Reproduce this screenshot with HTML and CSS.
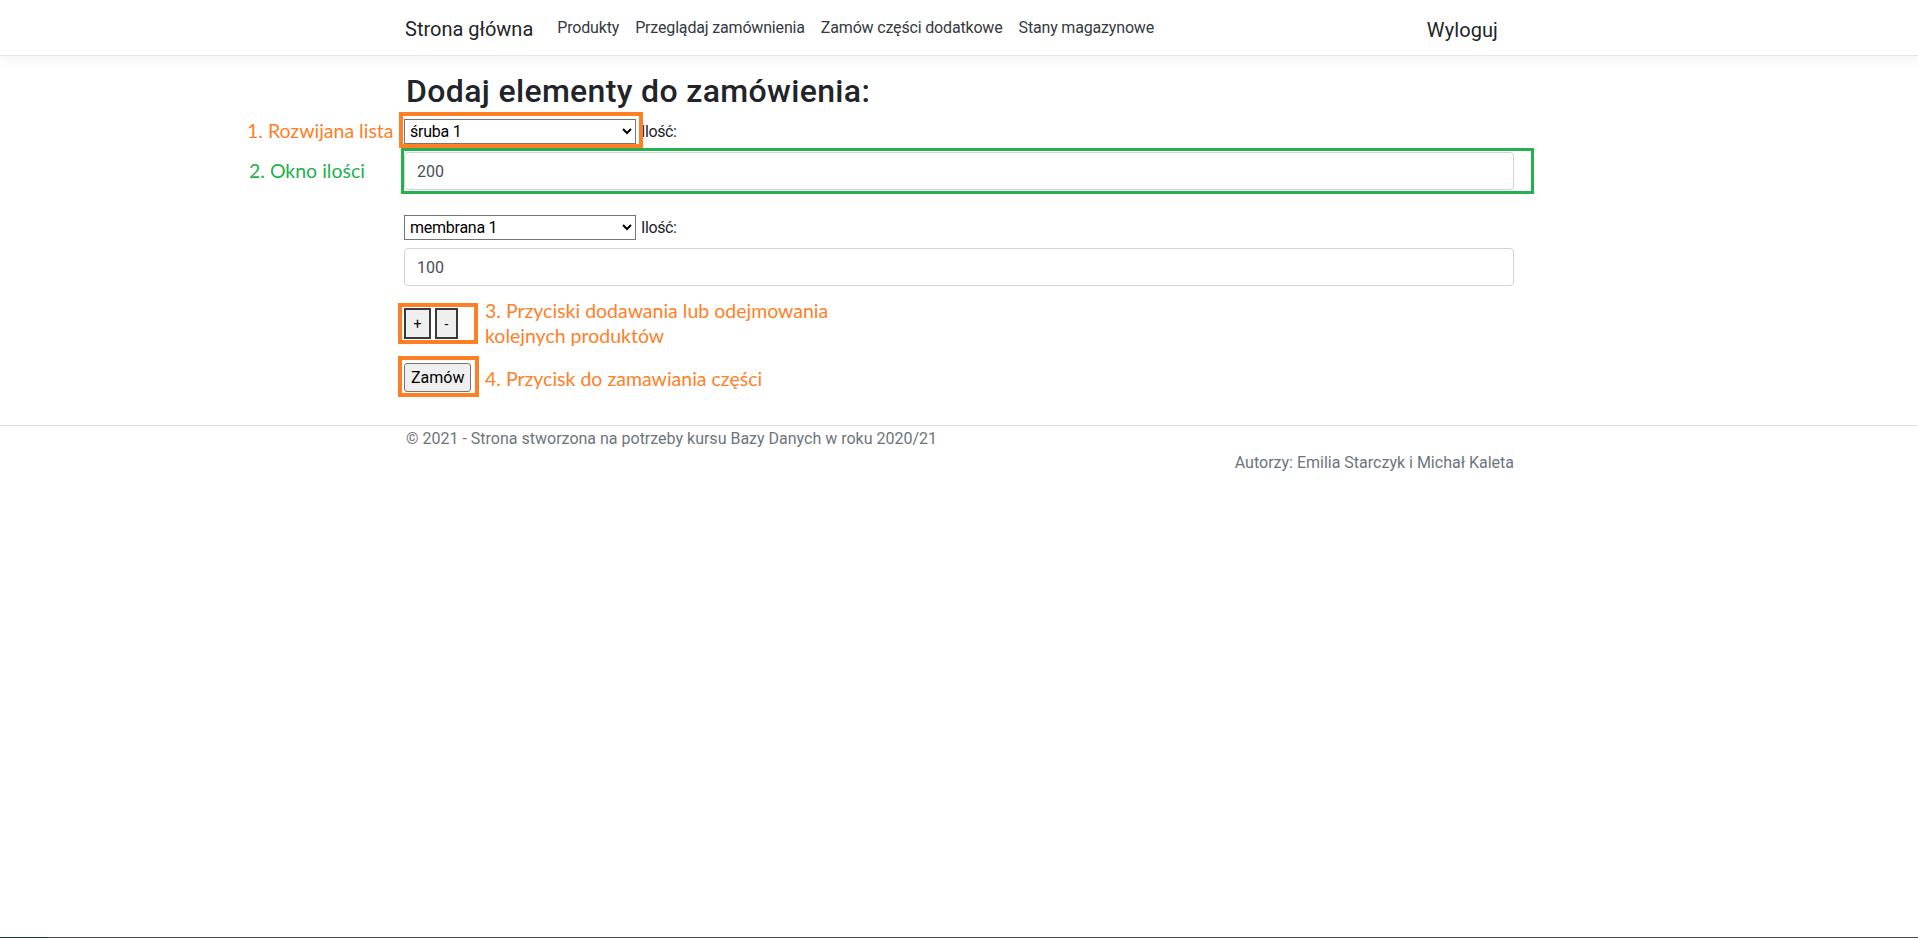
FILE: index.html
```html
<!DOCTYPE html>
<html lang="pl">
<head>
<meta charset="utf-8">
<title>Dodaj elementy do zamówienia</title>
<link rel="stylesheet" href="styles.css">
</head>
<body>
<div class="page">
  <header class="navbar">
    <div class="container nav-inner">
      <a class="brand" href="#">Strona główna</a>
      <ul class="nav-links">
        <li><a href="#">Produkty</a></li>
        <li><a href="#">Przeglądaj zamównienia</a></li>
        <li><a href="#">Zamów części dodatkowe</a></li>
        <li><a href="#">Stany magazynowe</a></li>
      </ul>
      <a class="logout" href="#">Wyloguj</a>
    </div>
  </header>

  <main class="container main">
    <h2 class="title">Dodaj elementy do zamówienia:</h2>
    <form class="order-form">
      <div class="item">
        <div class="item-row">
          <select class="product"><option>śruba 1</option><option>membrana 1</option></select>
          <label class="qty-label">Ilość:</label>
        </div>
        <input class="form-control" type="text" value="200">
      </div>
      <div class="item">
        <div class="item-row">
          <select class="product"><option>membrana 1</option><option>śruba 1</option></select>
          <label class="qty-label">Ilość:</label>
        </div>
        <input class="form-control" type="text" value="100">
      </div>
      <div class="adders">
        <button type="button" class="btn-sq">+</button>
        <button type="button" class="btn-sq btn-minus">-</button>
      </div>
      <div class="submit-row">
        <button type="button" class="btn-order">Zamów</button>
      </div>
    </form>
  </main>

  <footer class="footer">
    <div class="container">
      <div class="copy">© 2021 - Strona stworzona na potrzeby kursu Bazy Danych w roku 2020/21</div>
      <div class="authors">Autorzy: Emilia Starczyk i Michał Kaleta</div>
    </div>
  </footer>

  <div class="ann-box ann-box-1"></div>
  <div class="ann-box ann-box-2"></div>
  <div class="ann-box ann-box-3"></div>
  <div class="ann-box ann-box-4"></div>
  <div class="ann-text ann-text-1">1. Rozwijana lista</div>
  <div class="ann-text ann-text-2">2. Okno ilości</div>
  <div class="ann-text ann-text-3">3. Przyciski dodawania lub odejmowania<br>kolejnych produktów</div>
  <div class="ann-text ann-text-4">4. Przycisk do zamawiania części</div>

  <div class="taskbar-edge"><span class="taskbar-edge-start"></span></div>
</div>
</body>
</html>
```

FILE: styles.css
```css
* { box-sizing: border-box; }

html, body {
  margin: 0;
  padding: 0;
  background: #fff;
}

body {
  font-family: Roboto, "Liberation Sans", sans-serif;
  font-size: 16px;
  line-height: 1.5;
  color: #212529;
  min-height: 938px;
}

.page {
  position: relative;
  min-height: 938px;
}

.container {
  width: 1140px;
  margin: 0 auto;
  padding: 0 15px;
}

/* ---------- navbar ---------- */
.navbar {
  height: 56px;
  background: #fff;
  border-bottom: 1px solid #e3e5e8;
  box-shadow: 0 4px 12px rgba(0, 0, 0, 0.05);
}

.nav-inner {
  height: 55px;
  display: flex;
  align-items: center;
}

.brand {
  font-size: 20px;
  line-height: 30px;
  color: #212529;
  text-decoration: none;
  margin-left: 1px;
  margin-right: 16px;
  padding-top: 3px;
}

.nav-links {
  list-style: none;
  margin: 0;
  padding: 0;
  display: flex;
  flex: 1;
}

.nav-links a {
  display: block;
  padding: 8px 8px;
  font-size: 16px;
  line-height: 24px;
  color: #343a40;
  text-decoration: none;
  letter-spacing: -0.17px;
}

.logout {
  font-size: 20px;
  line-height: 30px;
  color: #212529;
  text-decoration: none;
  padding-right: 16px;
  padding-top: 5px;
  letter-spacing: 0.1px;
}

/* ---------- main ---------- */
.main {
  padding-top: 16px;
  padding-bottom: 33px;
}

.title {
  margin: 0 0 8.6px;
  font-size: 32px;
  line-height: 38.4px;
  font-weight: 500;
  color: #212529;
  padding-left: 2px;
  letter-spacing: 0.35px;
}

.item {
  margin-bottom: 25px;
}

.item-row {
  display: flex;
  align-items: center;
  height: 25px;
  margin-bottom: 8px;
}

.product {
  width: 232px;
  height: 25px;
  font-family: Roboto, "Liberation Sans", sans-serif;
  font-size: 16px;
  letter-spacing: -0.25px;
  color: #000;
  background: #fff;
  border: 1px solid #767676;
  border-radius: 0;
  padding: 0 0 0 1px;
  margin: 0;
}

.qty-label {
  margin-left: 5px;
  font-size: 16px;
  line-height: 24px;
  color: #212529;
  letter-spacing: -0.4px;
}

.form-control {
  display: block;
  width: 100%;
  height: 38px;
  padding: 6px 12px;
  font-family: Roboto, "Liberation Sans", sans-serif;
  font-size: 16px;
  line-height: 24px;
  color: #495057;
  background: #fff;
  border: 1px solid #ced4da;
  border-radius: 4px;
  margin: 0;
}

.adders {
  display: flex;
  gap: 4px;
  margin-top: -3px;
  margin-bottom: 24px;
}

.btn-sq {
  width: 27px;
  height: 31px;
  padding: 0;
  margin: 0;
  font-family: Roboto, "Liberation Sans", sans-serif;
  font-size: 14px;
  color: #000;
  background: #efefef;
  border: 2px solid #3a3a3a;
  border-radius: 0;
}

.btn-minus {
  width: 23px;
}

.submit-row {
  display: flex;
}

.btn-order {
  height: 29px;
  padding: 0 6px;
  margin: 0;
  font-family: Roboto, "Liberation Sans", sans-serif;
  font-size: 16px;
  color: #000;
  background: #efefef;
  border: 1px solid #767676;
  border-radius: 3px;
}

/* ---------- footer ---------- */
.footer {
  border-top: 1px solid #dee2e6;
  color: #6c757d;
  font-size: 16px;
  line-height: 24px;
}

.copy {
  padding-top: 1px;
  padding-left: 2px;
}

.authors {
  text-align: right;
}

/* ---------- annotations (overlay drawn on top of the screenshot) ---------- */
.ann-box {
  position: absolute;
  border: 4px solid #ff7f27;
}

.ann-box-1 { left: 399px; top: 112px; width: 244px; height: 36px; }
.ann-box-2 { left: 401px; top: 148px; width: 1133px; height: 46px; border: 3px solid #22b14c; }
.ann-box-3 { left: 398px; top: 303px; width: 80px; height: 41px; }
.ann-box-4 { left: 398px; top: 356px; width: 81px; height: 41px; }

.ann-text {
  position: absolute;
  font-family: Lato, "Open Sans", sans-serif;
  font-size: 19.5px;
  line-height: 25px;
  color: #ff7f27;
  white-space: nowrap;
}

.ann-text-1 { left: 247px; top: 118px; }
.ann-text-2 { left: 249px; top: 158px; color: #22b14c; }
.ann-text-3 { left: 485px; top: 298px; }
.ann-text-4 { left: 485px; top: 366px; }

.taskbar-edge {
  position: fixed;
  left: 0;
  right: 0;
  bottom: 0;
  height: 1px;
  background: #4a4a4a;
}

.taskbar-edge-start {
  display: block;
  width: 48px;
  height: 1px;
  background: #1e3b3f;
}
```
